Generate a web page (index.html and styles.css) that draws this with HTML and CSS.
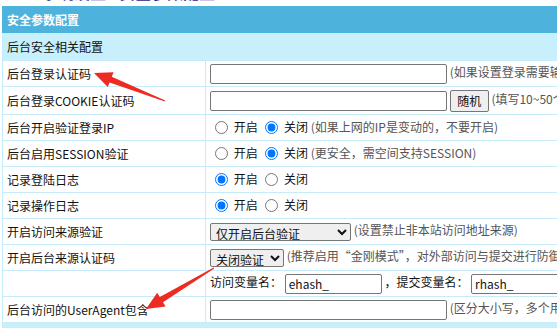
FILE: index.html
```html
<!DOCTYPE html>
<html>
    <head>
        <meta charset="utf-8">
        <link rel="stylesheet" href="styles.css">
    </head>
    <body>
        <div class="crumb">
            <div class="crumb-inner"><span class="crumb-icon">■■</span><span class="crumb-text">系统设置 - 安全参数配置</span></div>
        </div>
        <table class="conf">
            <tr class="head"><td colspan="2">安全参数配置</td></tr>
            <tr class="sub"><td colspan="2">后台安全相关配置</td></tr>
            <tr>
                <td class="label">后台登录认证码</td>
                <td><input class="txt"> <span class="hint">(如果设置登录需要输入此认证码才能登录)</span></td>
            </tr>
            <tr class="tall">
                <td class="label">后台登录COOKIE认证码</td>
                <td><input class="txt"> <button class="btn">随机</button> <span class="hint">(填写10~50个任意字符)</span></td>
            </tr>
            <tr>
                <td class="label">后台开启验证登录IP</td>
                <td><input type="radio" name="ip"> 开启 <input type="radio" name="ip" checked> 关闭 <span class="hint">(如果上网的IP是变动的，不要开启)</span></td>
            </tr>
            <tr>
                <td class="label">后台启用SESSION验证</td>
                <td><input type="radio" name="sess"> 开启 <input type="radio" name="sess" checked> 关闭 <span class="hint">(更安全，需空间支持SESSION)</span></td>
            </tr>
            <tr>
                <td class="label">记录登陆日志</td>
                <td><input type="radio" name="log1" checked> 开启 <input type="radio" name="log1"> 关闭</td>
            </tr>
            <tr>
                <td class="label">记录操作日志</td>
                <td><input type="radio" name="log2" checked> 开启 <input type="radio" name="log2"> 关闭</td>
            </tr>
            <tr>
                <td class="label">开启访问来源验证</td>
                <td>
                    <select class="sel wide"><option>仅开启后台验证</option></select>
                    <span class="hint">(设置禁止非本站访问地址来源)</span>
                </td>
            </tr>
            <tr>
                <td class="label">开启后台来源认证码</td>
                <td>
                    <select class="sel"><option>关闭验证</option></select>
                    <span class="hint">(推荐启用“金刚模式”，对外部访问与提交进行防御)</span>
                </td>
            </tr>
            <tr>
                <td class="label"></td>
                <td>访问变量名： <input class="txt short" value="ehash_"> ，提交变量名： <input class="txt short" value="rhash_"></td>
            </tr>
            <tr>
                <td class="label">后台访问的UserAgent包含</td>
                <td><input class="txt"> <span class="hint">(区分大小写，多个用逗号分开)</span></td>
            </tr>
            <tr class="foot"><td colspan="2"></td></tr>
        </table>
        <svg class="arrows" width="557" height="329" viewBox="0 0 557 329">
            <polygon points="165.2,100.5 111.8,76.8 113.6,72.2 94,73 107.8,87 109.6,82.4 164.8,101.5"/>
            <polygon points="213.7,267.6 159.8,297 157.2,292.8 146,309 165.6,306.4 163,302.2 214.3,268.4"/>
        </svg>
    </body>
</html>
```

FILE: styles.css
```css
html, body {
    margin: 0;
    overflow: hidden;
}
body {
    width: 557px;
    height: 329px;
    padding: 0 0 0 2px;
    font-family: "Noto Sans CJK SC", "DejaVu Sans", sans-serif;
    font-size: 12px;
    color: #111;
    position: relative;
}

.crumb {
    height: 6px;
    overflow: hidden;
    white-space: nowrap;
}
.crumb-inner {
    margin-top: -17px;
    height: 23px;
    font-size: 16px;
    line-height: 18px;
    font-weight: bold;
}
.crumb-icon {
    display: inline-block;
    color: #111;
    width: 40px;
}
.crumb-text {
    color: #1a2a8c;
}

table.conf {
    border-collapse: collapse;
    width: 720px;
    border: 1px solid #b5e3f5;
}
table.conf td {
    border: 1px solid #c6ecfb;
    padding: 0 4px;
    height: 25px;
    line-height: 16px;
    white-space: nowrap;
    vertical-align: middle;
}
tr.head td {
    background: #4eb3dc;
    color: #fff;
    font-weight: bold;
    height: 25px;
    border-color: #4eb3dc;
}
tr.sub td {
    background: #c8effc;
    height: 27px;
}
tr.tall td {
    height: 27px;
}
tr.foot td {
    background: #c8effc;
    height: 4px;
    padding: 0;
}
td.label {
    width: 194px;
}

.hint {
    color: #555;
}

input.txt {
    box-sizing: border-box;
    width: 237px;
    height: 20px;
    border: 1px solid #767676;
    border-radius: 2px;
    padding: 1px 3px;
    font: inherit;
    color: #111;
    vertical-align: middle;
    margin: 0;
}
input.txt.short {
    width: 97px;
}

input[type=radio] {
    vertical-align: middle;
    margin: 0 3px 2px 5px;
}

.btn {
    box-sizing: border-box;
    height: 22px;
    width: 39px;
    padding: 0;
    font: inherit;
    color: #111;
    background: #efefef;
    border: 1px solid #767676;
    border-radius: 2px;
    vertical-align: middle;
}

.sel {
    box-sizing: border-box;
    height: 18px;
    width: 74px;
    font: inherit;
    color: #111;
    border: 1px solid #767676;
    border-radius: 2px;
    padding: 0 0 0 1px;
    margin: 0;
    vertical-align: middle;
}
.sel.wide {
    width: 141px;
}

.arrows {
    position: absolute;
    left: 0;
    top: 0;
    pointer-events: none;
}
.arrows polygon {
    fill: #ee2b22;
}
```
